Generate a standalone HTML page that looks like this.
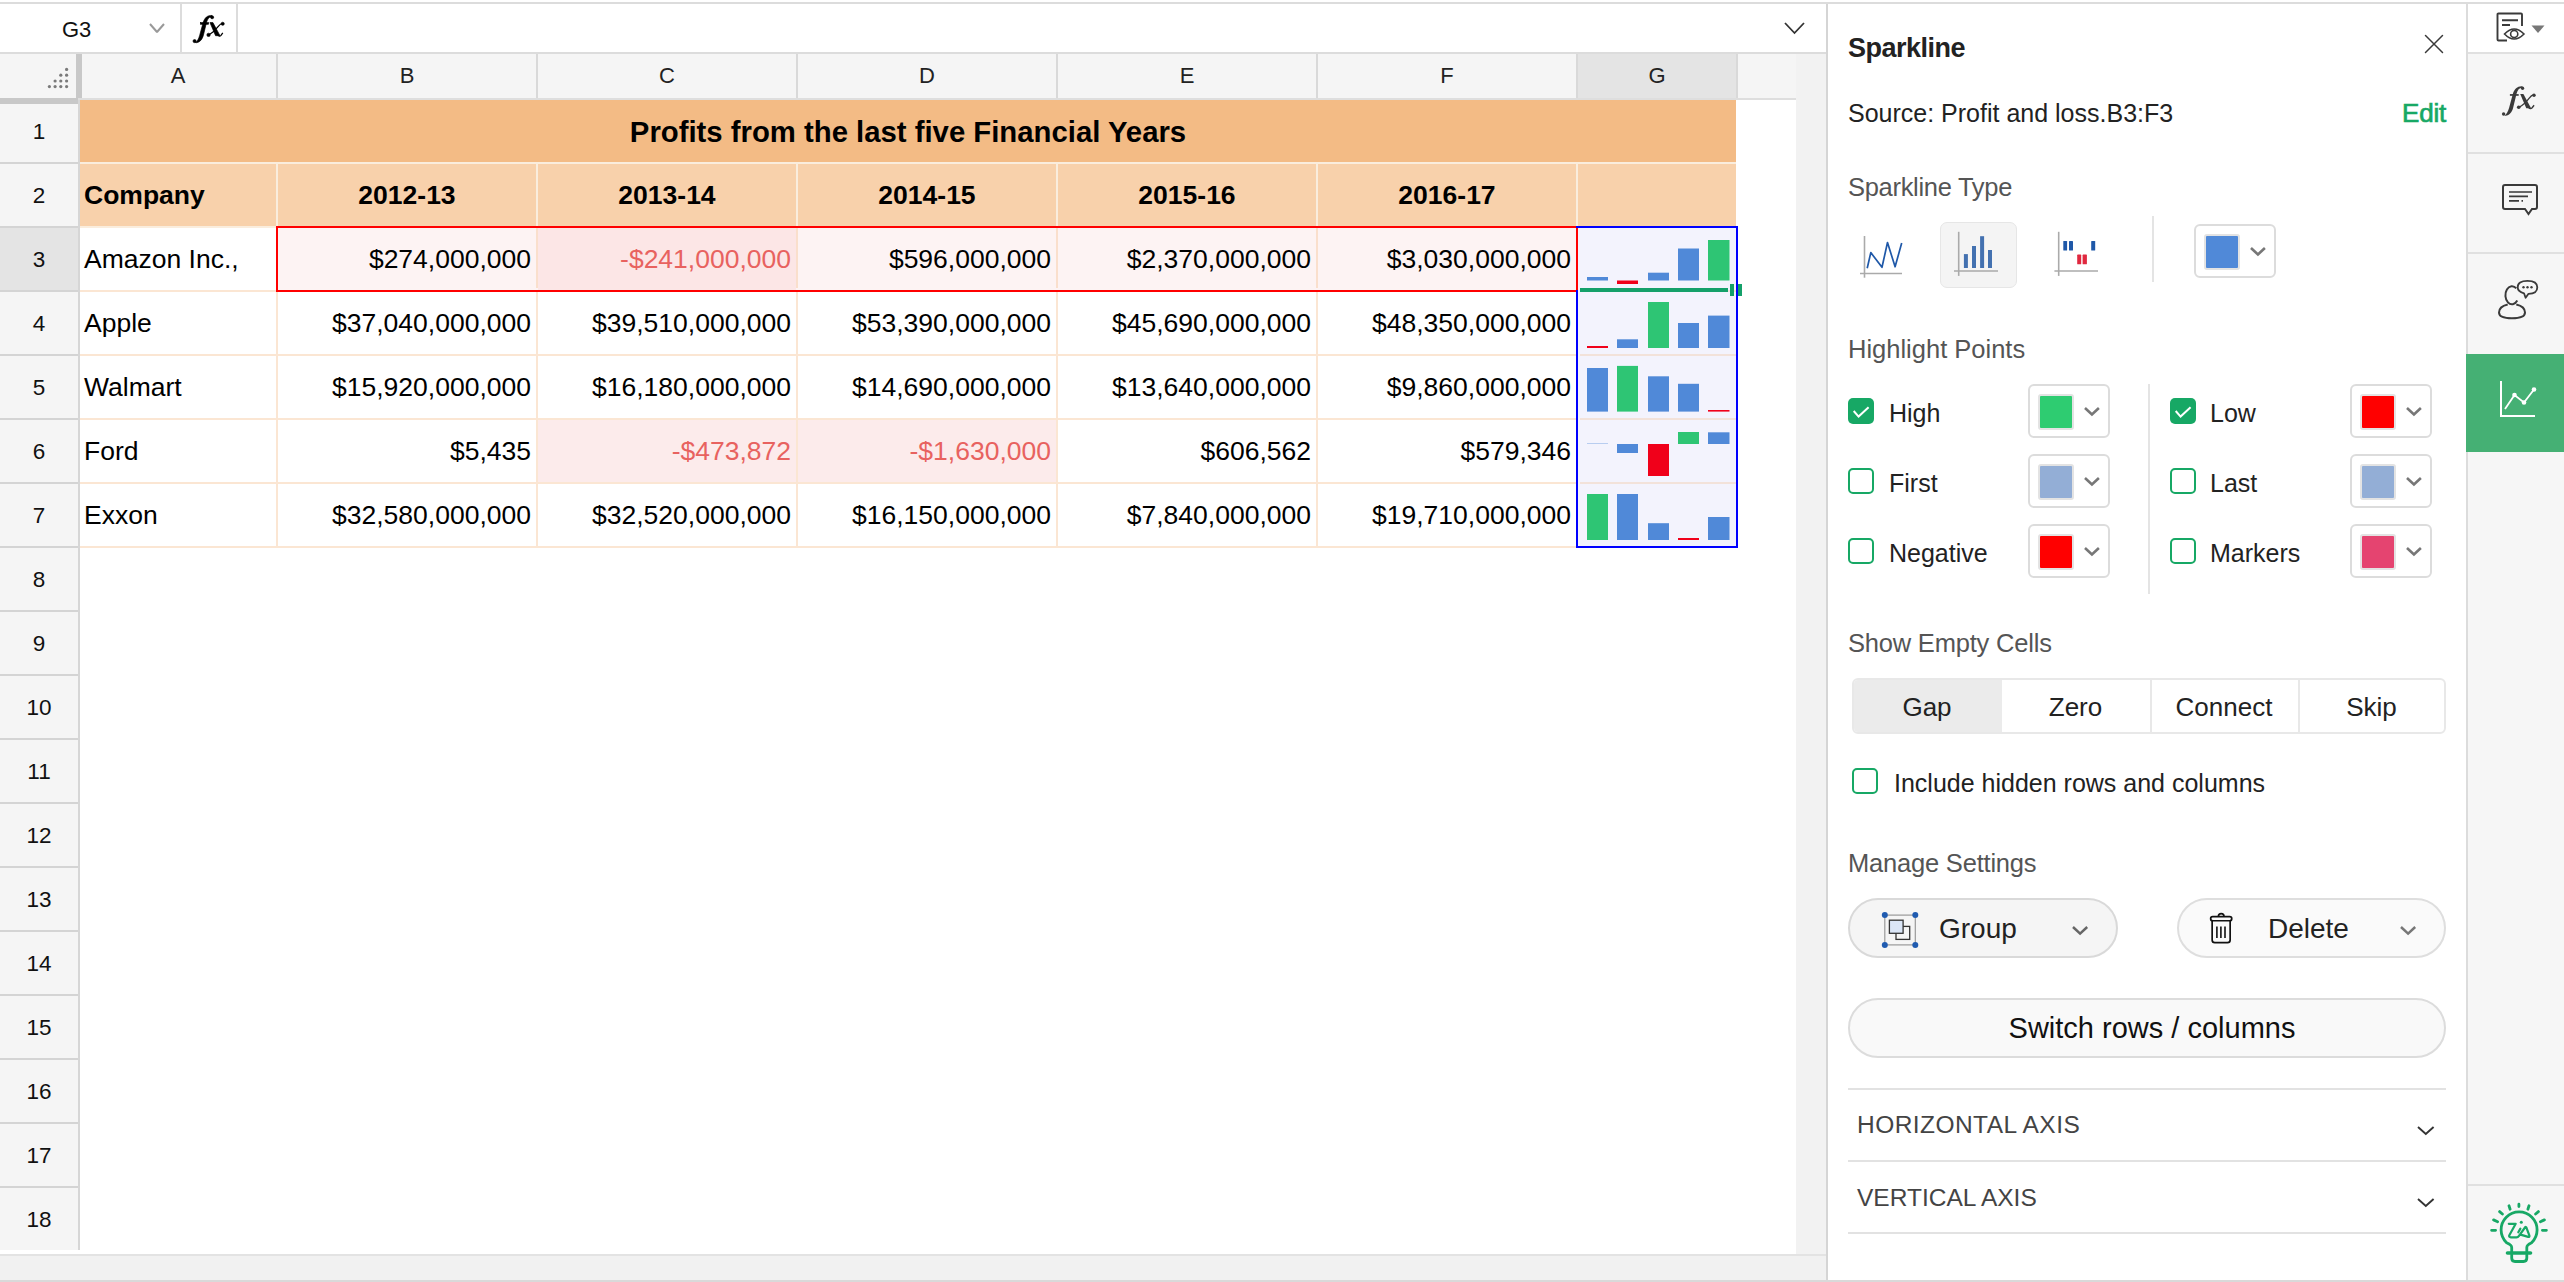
<!DOCTYPE html>
<html><head><meta charset="utf-8"><title>Sparkline</title>
<style>
html,body{margin:0;padding:0;}
body{width:2564px;height:1282px;position:relative;overflow:hidden;background:#fff;font-family:"Liberation Sans", sans-serif;}
.a{position:absolute;}
.t{position:absolute;white-space:nowrap;}
</style></head><body>
<div class="a" style="left:0px;top:2px;width:2564px;height:2px;background:#dcdcdc;"></div>
<div class="a" style="left:0px;top:52px;width:1826px;height:2px;background:#dcdcdc;"></div>
<div class="a" style="left:180px;top:4px;width:2px;height:48px;background:#dcdcdc;"></div>
<div class="a" style="left:236px;top:4px;width:2px;height:48px;background:#dcdcdc;"></div>
<div class="t" style="top:18.88px;font-size:22px;line-height:22px;color:#111;left:62px;">G3</div>
<svg class="a" style="left:148px;top:22px;" width="18" height="12" viewBox="0 0 18 12"><polyline points="2,2 9.0,10 16,2" fill="none" stroke="#999" stroke-width="2" stroke-linecap="butt" stroke-linejoin="miter" stroke-miterlimit="1.5"/></svg>
<svg class="a" style="left:181.5px;top:4.5px;" width="45" height="41" viewBox="0 0 45 41"><g transform="scale(0.925)" fill="#000" stroke="#000" stroke-width="0.7"><path d="M32.38,11.31 C27.31,10.92 24.58,14.05 23.02,18.34 L19.12,32.77 C17.95,37.07 16.39,39.41 14.44,40.58 L15.61,40.77 C19.51,40.19 21.85,37.07 23.02,33.16 L26.53,18.73 C27.70,14.83 29.65,12.49 32.38,12.88 Z"/><circle cx="32.58" cy="13.27" r="1.65"/><circle cx="13.6" cy="39.0" r="1.7"/><rect x="19.9" y="19.1" width="8.8" height="1.7"/><path d="M30.2,19.0 L33.4,19.0 L41.1,33.2 L36.3,33.2 Z"/><path d="M28.87,32.38 Q34.33,29.65 39.02,23.41 Q41.36,20.29 43.70,19.70" fill="none" stroke="#000" stroke-width="1.3"/><circle cx="44.0" cy="20.3" r="1.7"/><circle cx="28.7" cy="32.3" r="1.8"/><path d="M38.6,32.6 Q40.58,34.6 42.14,32.77 L44.09,30.24" fill="none" stroke="#000" stroke-width="1.4"/></g></svg>
<svg class="a" style="left:1783px;top:21px;" width="23" height="14" viewBox="0 0 23 14"><polyline points="2,2 11.5,12 21,2" fill="none" stroke="#333" stroke-width="1.8" stroke-linecap="butt" stroke-linejoin="miter" stroke-miterlimit="1.5"/></svg>
<div class="a" style="left:0px;top:54px;width:1796px;height:44px;background:#f5f5f5;"></div>
<div class="a" style="left:1578px;top:54px;width:158px;height:44px;background:#e4e4e4;"></div>
<div class="a" style="left:78px;top:98px;width:1718px;height:2px;background:#dedede;"></div>
<div class="a" style="left:276px;top:54px;width:2px;height:44px;background:#d9d9d9;"></div>
<div class="a" style="left:536px;top:54px;width:2px;height:44px;background:#d9d9d9;"></div>
<div class="a" style="left:796px;top:54px;width:2px;height:44px;background:#d9d9d9;"></div>
<div class="a" style="left:1056px;top:54px;width:2px;height:44px;background:#d9d9d9;"></div>
<div class="a" style="left:1316px;top:54px;width:2px;height:44px;background:#d9d9d9;"></div>
<div class="a" style="left:1576px;top:54px;width:2px;height:44px;background:#d9d9d9;"></div>
<div class="a" style="left:1736px;top:54px;width:2px;height:44px;background:#d9d9d9;"></div>
<div class="t" style="top:65.38px;font-size:22px;line-height:22px;color:#222;left:-822.0px;width:2000px;text-align:center;">A</div>
<div class="t" style="top:65.38px;font-size:22px;line-height:22px;color:#222;left:-593.0px;width:2000px;text-align:center;">B</div>
<div class="t" style="top:65.38px;font-size:22px;line-height:22px;color:#222;left:-333.0px;width:2000px;text-align:center;">C</div>
<div class="t" style="top:65.38px;font-size:22px;line-height:22px;color:#222;left:-73.0px;width:2000px;text-align:center;">D</div>
<div class="t" style="top:65.38px;font-size:22px;line-height:22px;color:#222;left:187.0px;width:2000px;text-align:center;">E</div>
<div class="t" style="top:65.38px;font-size:22px;line-height:22px;color:#222;left:447.0px;width:2000px;text-align:center;">F</div>
<div class="t" style="top:65.38px;font-size:22px;line-height:22px;color:#222;left:657.0px;width:2000px;text-align:center;">G</div>
<div class="a" style="left:0px;top:100px;width:78px;height:1150px;background:#f5f5f5;"></div>
<div class="a" style="left:78px;top:100px;width:2px;height:1150px;background:#d6d6d6;"></div>
<div class="a" style="left:0px;top:228px;width:78px;height:62px;background:#e4e4e4;"></div>
<div class="a" style="left:0px;top:162px;width:78px;height:2px;background:#d4d4d4;"></div>
<div class="t" style="top:121.15px;font-size:22.5px;line-height:22.5px;color:#111;left:-961px;width:2000px;text-align:center;">1</div>
<div class="a" style="left:0px;top:226px;width:78px;height:2px;background:#d4d4d4;"></div>
<div class="t" style="top:185.15px;font-size:22.5px;line-height:22.5px;color:#111;left:-961px;width:2000px;text-align:center;">2</div>
<div class="a" style="left:0px;top:290px;width:78px;height:2px;background:#d4d4d4;"></div>
<div class="t" style="top:249.15px;font-size:22.5px;line-height:22.5px;color:#111;left:-961px;width:2000px;text-align:center;">3</div>
<div class="a" style="left:0px;top:354px;width:78px;height:2px;background:#d4d4d4;"></div>
<div class="t" style="top:313.15px;font-size:22.5px;line-height:22.5px;color:#111;left:-961px;width:2000px;text-align:center;">4</div>
<div class="a" style="left:0px;top:418px;width:78px;height:2px;background:#d4d4d4;"></div>
<div class="t" style="top:377.15px;font-size:22.5px;line-height:22.5px;color:#111;left:-961px;width:2000px;text-align:center;">5</div>
<div class="a" style="left:0px;top:482px;width:78px;height:2px;background:#d4d4d4;"></div>
<div class="t" style="top:441.15px;font-size:22.5px;line-height:22.5px;color:#111;left:-961px;width:2000px;text-align:center;">6</div>
<div class="a" style="left:0px;top:546px;width:78px;height:2px;background:#d4d4d4;"></div>
<div class="t" style="top:505.15px;font-size:22.5px;line-height:22.5px;color:#111;left:-961px;width:2000px;text-align:center;">7</div>
<div class="a" style="left:0px;top:610px;width:78px;height:2px;background:#d4d4d4;"></div>
<div class="t" style="top:569.15px;font-size:22.5px;line-height:22.5px;color:#111;left:-961px;width:2000px;text-align:center;">8</div>
<div class="a" style="left:0px;top:674px;width:78px;height:2px;background:#d4d4d4;"></div>
<div class="t" style="top:633.15px;font-size:22.5px;line-height:22.5px;color:#111;left:-961px;width:2000px;text-align:center;">9</div>
<div class="a" style="left:0px;top:738px;width:78px;height:2px;background:#d4d4d4;"></div>
<div class="t" style="top:697.15px;font-size:22.5px;line-height:22.5px;color:#111;left:-961px;width:2000px;text-align:center;">10</div>
<div class="a" style="left:0px;top:802px;width:78px;height:2px;background:#d4d4d4;"></div>
<div class="t" style="top:761.15px;font-size:22.5px;line-height:22.5px;color:#111;left:-961px;width:2000px;text-align:center;">11</div>
<div class="a" style="left:0px;top:866px;width:78px;height:2px;background:#d4d4d4;"></div>
<div class="t" style="top:825.15px;font-size:22.5px;line-height:22.5px;color:#111;left:-961px;width:2000px;text-align:center;">12</div>
<div class="a" style="left:0px;top:930px;width:78px;height:2px;background:#d4d4d4;"></div>
<div class="t" style="top:889.15px;font-size:22.5px;line-height:22.5px;color:#111;left:-961px;width:2000px;text-align:center;">13</div>
<div class="a" style="left:0px;top:994px;width:78px;height:2px;background:#d4d4d4;"></div>
<div class="t" style="top:953.15px;font-size:22.5px;line-height:22.5px;color:#111;left:-961px;width:2000px;text-align:center;">14</div>
<div class="a" style="left:0px;top:1058px;width:78px;height:2px;background:#d4d4d4;"></div>
<div class="t" style="top:1017.15px;font-size:22.5px;line-height:22.5px;color:#111;left:-961px;width:2000px;text-align:center;">15</div>
<div class="a" style="left:0px;top:1122px;width:78px;height:2px;background:#d4d4d4;"></div>
<div class="t" style="top:1081.15px;font-size:22.5px;line-height:22.5px;color:#111;left:-961px;width:2000px;text-align:center;">16</div>
<div class="a" style="left:0px;top:1186px;width:78px;height:2px;background:#d4d4d4;"></div>
<div class="t" style="top:1145.15px;font-size:22.5px;line-height:22.5px;color:#111;left:-961px;width:2000px;text-align:center;">17</div>
<div class="t" style="top:1209.15px;font-size:22.5px;line-height:22.5px;color:#111;left:-961px;width:2000px;text-align:center;">18</div>
<div class="a" style="left:76px;top:54px;width:6px;height:44px;background:#c8c8c8;"></div>
<div class="a" style="left:0px;top:98px;width:78px;height:6px;background:#c8c8c8;"></div>
<svg class="a" style="left:40px;top:60px;" width="40" height="40" viewBox="0 0 40 40"><circle cx="26.599999999999994" cy="9.400000000000006" r="1.6" fill="#7a7a7a"/><circle cx="20.799999999999997" cy="15.200000000000003" r="1.6" fill="#7a7a7a"/><circle cx="26.599999999999994" cy="15.200000000000003" r="1.6" fill="#7a7a7a"/><circle cx="15.100000000000001" cy="21.0" r="1.6" fill="#7a7a7a"/><circle cx="20.799999999999997" cy="21.0" r="1.6" fill="#7a7a7a"/><circle cx="26.599999999999994" cy="21.0" r="1.6" fill="#7a7a7a"/><circle cx="9.399999999999999" cy="26.599999999999994" r="1.6" fill="#7a7a7a"/><circle cx="15.100000000000001" cy="26.599999999999994" r="1.6" fill="#7a7a7a"/><circle cx="20.799999999999997" cy="26.599999999999994" r="1.6" fill="#7a7a7a"/><circle cx="26.599999999999994" cy="26.599999999999994" r="1.6" fill="#7a7a7a"/></svg>
<div class="a" style="left:1796px;top:54px;width:30px;height:1200px;background:#f2f2f2;"></div>
<div class="a" style="left:0px;top:1254px;width:1826px;height:2px;background:#e3e3e3;"></div>
<div class="a" style="left:0px;top:1256px;width:1826px;height:24px;background:#f1f1f1;"></div>
<div class="a" style="left:0px;top:1280px;width:2564px;height:2px;background:#d9d9d9;"></div>
<div class="a" style="left:80px;top:100px;width:1656px;height:62px;background:#f3bb85;"></div>
<div class="a" style="left:80px;top:162px;width:1656px;height:2px;background:#faeddd;"></div>
<div class="a" style="left:80px;top:164px;width:1656px;height:62px;background:#f8d1ab;"></div>
<div class="a" style="left:276px;top:164px;width:2px;height:62px;background:#faeddd;"></div>
<div class="a" style="left:536px;top:164px;width:2px;height:62px;background:#faeddd;"></div>
<div class="a" style="left:796px;top:164px;width:2px;height:62px;background:#faeddd;"></div>
<div class="a" style="left:1056px;top:164px;width:2px;height:62px;background:#faeddd;"></div>
<div class="a" style="left:1316px;top:164px;width:2px;height:62px;background:#faeddd;"></div>
<div class="a" style="left:1576px;top:164px;width:2px;height:62px;background:#faeddd;"></div>
<div class="a" style="left:80px;top:226px;width:1656px;height:2px;background:#faeddd;"></div>
<div class="a" style="left:80px;top:290px;width:1656px;height:2px;background:#fbe6d3;"></div>
<div class="a" style="left:80px;top:354px;width:1656px;height:2px;background:#fbe6d3;"></div>
<div class="a" style="left:80px;top:418px;width:1656px;height:2px;background:#fbe6d3;"></div>
<div class="a" style="left:80px;top:482px;width:1656px;height:2px;background:#fbe6d3;"></div>
<div class="a" style="left:80px;top:546px;width:1656px;height:2px;background:#fbe6d3;"></div>
<div class="a" style="left:276px;top:228px;width:2px;height:320px;background:#fbe6d3;"></div>
<div class="a" style="left:536px;top:228px;width:2px;height:320px;background:#fbe6d3;"></div>
<div class="a" style="left:796px;top:228px;width:2px;height:320px;background:#fbe6d3;"></div>
<div class="a" style="left:1056px;top:228px;width:2px;height:320px;background:#fbe6d3;"></div>
<div class="a" style="left:1316px;top:228px;width:2px;height:320px;background:#fbe6d3;"></div>
<div class="a" style="left:1576px;top:228px;width:2px;height:320px;background:#fbe6d3;"></div>
<div class="a" style="left:1736px;top:228px;width:2px;height:320px;background:#fbe6d3;"></div>
<div class="a" style="left:278px;top:228px;width:1298px;height:62px;background:#fdf3f3;"></div>
<div class="a" style="left:536px;top:228px;width:2px;height:60px;background:#fadfcc;"></div>
<div class="a" style="left:796px;top:228px;width:2px;height:60px;background:#fadfcc;"></div>
<div class="a" style="left:1056px;top:228px;width:2px;height:60px;background:#fadfcc;"></div>
<div class="a" style="left:1316px;top:228px;width:2px;height:60px;background:#fadfcc;"></div>
<div class="a" style="left:538px;top:228px;width:258px;height:62px;background:#fce6e6;"></div>
<div class="a" style="left:538px;top:420px;width:258px;height:62px;background:#fcebeb;"></div>
<div class="a" style="left:798px;top:420px;width:258px;height:62px;background:#fcebeb;"></div>
<div class="a" style="left:1578px;top:228px;width:158px;height:318px;background:#f3f3fd;"></div>
<div class="a" style="left:1580px;top:290px;width:156px;height:2px;background:#f2e2da;"></div>
<div class="a" style="left:1580px;top:354px;width:156px;height:2px;background:#f2e2da;"></div>
<div class="a" style="left:1580px;top:418px;width:156px;height:2px;background:#f2e2da;"></div>
<div class="a" style="left:1580px;top:482px;width:156px;height:2px;background:#f2e2da;"></div>
<div class="t" style="top:116.70px;font-size:29.3px;line-height:29.3px;color:#000;font-weight:700;left:-92px;width:2000px;text-align:center;">Profits from the last five Financial Years</div>
<div class="t" style="top:182.07px;font-size:26.5px;line-height:26.5px;color:#000;font-weight:700;left:84px;">Company</div>
<div class="t" style="top:182.07px;font-size:26.5px;line-height:26.5px;color:#000;font-weight:700;left:-593.0px;width:2000px;text-align:center;">2012-13</div>
<div class="t" style="top:182.07px;font-size:26.5px;line-height:26.5px;color:#000;font-weight:700;left:-333.0px;width:2000px;text-align:center;">2013-14</div>
<div class="t" style="top:182.07px;font-size:26.5px;line-height:26.5px;color:#000;font-weight:700;left:-73.0px;width:2000px;text-align:center;">2014-15</div>
<div class="t" style="top:182.07px;font-size:26.5px;line-height:26.5px;color:#000;font-weight:700;left:187.0px;width:2000px;text-align:center;">2015-16</div>
<div class="t" style="top:182.07px;font-size:26.5px;line-height:26.5px;color:#000;font-weight:700;left:447.0px;width:2000px;text-align:center;">2016-17</div>
<div class="t" style="top:246.07px;font-size:26.5px;line-height:26.5px;color:#000;left:84px;">Amazon Inc.,</div>
<div class="t" style="top:246.07px;font-size:26.5px;line-height:26.5px;color:#000;left:-469px;width:1000px;text-align:right;">$274,000,000</div>
<div class="t" style="top:246.07px;font-size:26.5px;line-height:26.5px;color:#e8625f;left:-209px;width:1000px;text-align:right;">-$241,000,000</div>
<div class="t" style="top:246.07px;font-size:26.5px;line-height:26.5px;color:#000;left:51px;width:1000px;text-align:right;">$596,000,000</div>
<div class="t" style="top:246.07px;font-size:26.5px;line-height:26.5px;color:#000;left:311px;width:1000px;text-align:right;">$2,370,000,000</div>
<div class="t" style="top:246.07px;font-size:26.5px;line-height:26.5px;color:#000;left:571px;width:1000px;text-align:right;">$3,030,000,000</div>
<div class="t" style="top:310.07px;font-size:26.5px;line-height:26.5px;color:#000;left:84px;">Apple</div>
<div class="t" style="top:310.07px;font-size:26.5px;line-height:26.5px;color:#000;left:-469px;width:1000px;text-align:right;">$37,040,000,000</div>
<div class="t" style="top:310.07px;font-size:26.5px;line-height:26.5px;color:#000;left:-209px;width:1000px;text-align:right;">$39,510,000,000</div>
<div class="t" style="top:310.07px;font-size:26.5px;line-height:26.5px;color:#000;left:51px;width:1000px;text-align:right;">$53,390,000,000</div>
<div class="t" style="top:310.07px;font-size:26.5px;line-height:26.5px;color:#000;left:311px;width:1000px;text-align:right;">$45,690,000,000</div>
<div class="t" style="top:310.07px;font-size:26.5px;line-height:26.5px;color:#000;left:571px;width:1000px;text-align:right;">$48,350,000,000</div>
<div class="t" style="top:374.07px;font-size:26.5px;line-height:26.5px;color:#000;left:84px;">Walmart</div>
<div class="t" style="top:374.07px;font-size:26.5px;line-height:26.5px;color:#000;left:-469px;width:1000px;text-align:right;">$15,920,000,000</div>
<div class="t" style="top:374.07px;font-size:26.5px;line-height:26.5px;color:#000;left:-209px;width:1000px;text-align:right;">$16,180,000,000</div>
<div class="t" style="top:374.07px;font-size:26.5px;line-height:26.5px;color:#000;left:51px;width:1000px;text-align:right;">$14,690,000,000</div>
<div class="t" style="top:374.07px;font-size:26.5px;line-height:26.5px;color:#000;left:311px;width:1000px;text-align:right;">$13,640,000,000</div>
<div class="t" style="top:374.07px;font-size:26.5px;line-height:26.5px;color:#000;left:571px;width:1000px;text-align:right;">$9,860,000,000</div>
<div class="t" style="top:438.07px;font-size:26.5px;line-height:26.5px;color:#000;left:84px;">Ford</div>
<div class="t" style="top:438.07px;font-size:26.5px;line-height:26.5px;color:#000;left:-469px;width:1000px;text-align:right;">$5,435</div>
<div class="t" style="top:438.07px;font-size:26.5px;line-height:26.5px;color:#e8625f;left:-209px;width:1000px;text-align:right;">-$473,872</div>
<div class="t" style="top:438.07px;font-size:26.5px;line-height:26.5px;color:#e8625f;left:51px;width:1000px;text-align:right;">-$1,630,000</div>
<div class="t" style="top:438.07px;font-size:26.5px;line-height:26.5px;color:#000;left:311px;width:1000px;text-align:right;">$606,562</div>
<div class="t" style="top:438.07px;font-size:26.5px;line-height:26.5px;color:#000;left:571px;width:1000px;text-align:right;">$579,346</div>
<div class="t" style="top:502.07px;font-size:26.5px;line-height:26.5px;color:#000;left:84px;">Exxon</div>
<div class="t" style="top:502.07px;font-size:26.5px;line-height:26.5px;color:#000;left:-469px;width:1000px;text-align:right;">$32,580,000,000</div>
<div class="t" style="top:502.07px;font-size:26.5px;line-height:26.5px;color:#000;left:-209px;width:1000px;text-align:right;">$32,520,000,000</div>
<div class="t" style="top:502.07px;font-size:26.5px;line-height:26.5px;color:#000;left:51px;width:1000px;text-align:right;">$16,150,000,000</div>
<div class="t" style="top:502.07px;font-size:26.5px;line-height:26.5px;color:#000;left:311px;width:1000px;text-align:right;">$7,840,000,000</div>
<div class="t" style="top:502.07px;font-size:26.5px;line-height:26.5px;color:#000;left:571px;width:1000px;text-align:right;">$19,710,000,000</div>
<div class="a" style="left:276px;top:226px;width:1302px;height:66px;border:2px solid #ff0000;box-sizing:border-box;"></div>
<div class="a" style="left:1576px;top:226px;width:162px;height:322px;border:2px solid #0000ff;box-sizing:border-box;"></div>
<div class="a" style="left:1576px;top:228px;width:2px;height:62px;background:#ff0000;"></div>
<svg class="a" style="left:1570px;top:220px;" width="180" height="340" viewBox="0 0 180 340"><rect x="17" y="57" width="21" height="3.5" fill="#5089d8"/><rect x="47" y="60.5" width="21" height="3.5" fill="#f0001a"/><rect x="78" y="52.69999999999999" width="21" height="7.800000000000011" fill="#5089d8"/><rect x="108" y="28.5" width="21" height="32.0" fill="#5089d8"/><rect x="138" y="20" width="21.5" height="40.5" fill="#2ec574"/><rect x="17" y="126" width="21" height="2" fill="#f0001a"/><rect x="47" y="119.30000000000001" width="21" height="8.699999999999989" fill="#5089d8"/><rect x="78" y="82" width="21" height="46" fill="#2ec574"/><rect x="108" y="103" width="21" height="25" fill="#5089d8"/><rect x="138" y="95.60000000000002" width="21.5" height="32.39999999999998" fill="#5089d8"/><rect x="17" y="148" width="21" height="43.60000000000002" fill="#5089d8"/><rect x="47" y="145.89999999999998" width="21" height="45.700000000000045" fill="#2ec574"/><rect x="78" y="156.3" width="21" height="35.30000000000001" fill="#5089d8"/><rect x="108" y="163.8" width="21" height="27.80000000000001" fill="#5089d8"/><rect x="138" y="190" width="21.5" height="1.6000000000000227" fill="#f0001a"/><rect x="17" y="223" width="21" height="1" fill="#b8cdf0"/><rect x="47" y="224" width="21" height="9" fill="#5089d8"/><rect x="78" y="224" width="21" height="32" fill="#f0001a"/><rect x="108" y="212" width="21" height="12" fill="#2ec574"/><rect x="138" y="212.3" width="21.5" height="11.699999999999989" fill="#5089d8"/><rect x="17" y="274" width="21" height="46" fill="#2ec574"/><rect x="47" y="274" width="21" height="46" fill="#5089d8"/><rect x="78" y="303.20000000000005" width="21" height="16.799999999999955" fill="#5089d8"/><rect x="108" y="318" width="21" height="2" fill="#f0001a"/><rect x="138" y="297" width="21.5" height="23" fill="#5089d8"/></svg>
<div class="a" style="left:1580px;top:288px;width:148px;height:4px;background:#14a06a;"></div>
<div class="a" style="left:1730px;top:284px;width:4px;height:12px;background:#14a06a;"></div>
<div class="a" style="left:1737.5px;top:284px;width:4px;height:12px;background:#14a06a;"></div>
<div class="a" style="left:1826px;top:4px;width:2px;height:1276px;background:#d5d5d5;"></div>
<div id="panel-end"></div>
<div class="t" style="top:35.14px;font-size:27px;line-height:27px;color:#222;font-weight:700;letter-spacing:-0.5px;left:1848px;">Sparkline</div>
<svg class="a" style="left:2423px;top:33px;" width="22" height="22" viewBox="0 0 22 22"><path d="M2.5,2.5 L19.5,19.5 M19.5,2.5 L2.5,19.5" stroke="#3a3a3a" stroke-width="1.5" stroke-linecap="round" fill="none"/></svg>
<div class="t" style="top:100.84px;font-size:25px;line-height:25px;color:#222;left:1848px;">Source: Profit and loss.B3:F3</div>
<div class="t" style="top:99.99px;font-size:26px;line-height:26px;color:#18a865;letter-spacing:-0.2px;left:1446px;width:1000px;text-align:right;-webkit-text-stroke:0.7px #18a865;">Edit</div>
<div class="t" style="top:175.41px;font-size:25.5px;line-height:25.5px;color:#555;letter-spacing:-0.3px;left:1848px;">Sparkline Type</div>
<svg class="a" style="left:1850px;top:220px;" width="60" height="60" viewBox="0 0 60 60"><path d="M14.5,16 V57.7" stroke="#aaa" stroke-width="1.6"/><path d="M10,53.5 H52" stroke="#aaa" stroke-width="1.6"/><polyline points="17.2,48.3 20.8,32.6 32,47.3 37.5,22.5 45.1,46.8 51.7,23" fill="none" stroke="#1f58a8" stroke-width="1.7" stroke-linejoin="round"/></svg>
<div class="a" style="left:1940px;top:222px;width:77px;height:66px;background:#f4f4f4;border:1.5px solid #e6e6e6;border-radius:7px;box-sizing:border-box;"></div>
<svg class="a" style="left:1940px;top:220px;" width="62" height="60" viewBox="0 0 62 60"><path d="M18.7,11.8 V55.9" stroke="#aaa" stroke-width="1.6"/><path d="M14,51 H58" stroke="#aaa" stroke-width="1.6"/><rect x="23.9" y="34.1" width="4" height="13.9" fill="#4371b0"/><rect x="32" y="26" width="4" height="22" fill="#4371b0"/><rect x="40.1" y="16.2" width="4" height="31.8" fill="#4371b0"/><rect x="48" y="30" width="4" height="18" fill="#4371b0"/></svg>
<svg class="a" style="left:2040px;top:220px;" width="62" height="60" viewBox="0 0 62 60"><path d="M18.7,11.8 V55.9" stroke="#aaa" stroke-width="1.6"/><path d="M14.4,51 H58" stroke="#aaa" stroke-width="1.6"/><rect x="23.3" y="21" width="3.8" height="9.6" rx="0.6" fill="#1f58a8"/><rect x="29" y="21" width="4" height="9.6" rx="0.6" fill="#1f58a8"/><rect x="51.2" y="21" width="4" height="9.6" rx="0.6" fill="#1f58a8"/><rect x="37.2" y="34.6" width="4" height="9.7" rx="0.6" fill="#e0283f"/><rect x="42.6" y="34.6" width="4.3" height="9.7" rx="0.6" fill="#e0283f"/></svg>
<div class="a" style="left:2152px;top:216px;width:2px;height:66px;background:#e4e4e4;"></div>
<div class="a" style="left:2194px;top:224px;width:82px;height:54px;background:#fff;border:2px solid #dcdcdc;border-radius:6px;box-sizing:border-box;"></div>
<div class="a" style="left:2204px;top:234px;width:36px;height:36px;background:#5089d8;border:2px solid #e3e3e3;border-radius:3px;box-sizing:border-box;"></div>
<svg class="a" style="left:2249.3px;top:246.3px;" width="17.899999999999636" height="10.5" viewBox="0 0 17.899999999999636 10.5"><polyline points="2,2 8.949999999999818,8.5 15.899999999999636,2" fill="none" stroke="#777" stroke-width="2.6" stroke-linecap="butt" stroke-linejoin="miter" stroke-miterlimit="1.5"/></svg>
<div class="t" style="top:336.91px;font-size:25.5px;line-height:25.5px;color:#555;left:1848px;">Highlight Points</div>
<div class="a" style="left:1848px;top:398px;width:26px;height:26px;background:#17a865;border-radius:5px;"></div>
<svg class="a" style="left:1848px;top:398px;" width="26" height="26" viewBox="0 0 26 26"><polyline points="5.7,13 10.6,18.6 20.6,9.3" fill="none" stroke="#fff" stroke-width="2"/></svg>
<div class="t" style="top:400.84px;font-size:25px;line-height:25px;color:#222;left:1889px;">High</div>
<div class="a" style="left:2028px;top:384px;width:82px;height:54px;background:#fff;border:2px solid #dcdcdc;border-radius:6px;box-sizing:border-box;"></div>
<div class="a" style="left:2038px;top:394px;width:36px;height:36px;background:#2ecc71;border:2px solid #e3e3e3;border-radius:3px;box-sizing:border-box;"></div>
<svg class="a" style="left:2083.3px;top:406.3px;" width="17.899999999999636" height="10.5" viewBox="0 0 17.899999999999636 10.5"><polyline points="2,2 8.949999999999818,8.5 15.899999999999636,2" fill="none" stroke="#777" stroke-width="2.6" stroke-linecap="butt" stroke-linejoin="miter" stroke-miterlimit="1.5"/></svg>
<div class="a" style="left:2170px;top:398px;width:26px;height:26px;background:#17a865;border-radius:5px;"></div>
<svg class="a" style="left:2170px;top:398px;" width="26" height="26" viewBox="0 0 26 26"><polyline points="5.7,13 10.6,18.6 20.6,9.3" fill="none" stroke="#fff" stroke-width="2"/></svg>
<div class="t" style="top:400.84px;font-size:25px;line-height:25px;color:#222;left:2210px;">Low</div>
<div class="a" style="left:2350px;top:384px;width:82px;height:54px;background:#fff;border:2px solid #dcdcdc;border-radius:6px;box-sizing:border-box;"></div>
<div class="a" style="left:2360px;top:394px;width:36px;height:36px;background:#ff0000;border:2px solid #e3e3e3;border-radius:3px;box-sizing:border-box;"></div>
<svg class="a" style="left:2405.3px;top:406.3px;" width="17.899999999999636" height="10.5" viewBox="0 0 17.899999999999636 10.5"><polyline points="2,2 8.949999999999818,8.5 15.899999999999636,2" fill="none" stroke="#777" stroke-width="2.6" stroke-linecap="butt" stroke-linejoin="miter" stroke-miterlimit="1.5"/></svg>
<div class="a" style="left:1848px;top:468px;width:26px;height:26px;background:#fff;border:2px solid #17a865;border-radius:5px;box-sizing:border-box;"></div>
<div class="t" style="top:470.84px;font-size:25px;line-height:25px;color:#222;left:1889px;">First</div>
<div class="a" style="left:2028px;top:454px;width:82px;height:54px;background:#fff;border:2px solid #dcdcdc;border-radius:6px;box-sizing:border-box;"></div>
<div class="a" style="left:2038px;top:464px;width:36px;height:36px;background:#93aed6;border:2px solid #e3e3e3;border-radius:3px;box-sizing:border-box;"></div>
<svg class="a" style="left:2083.3px;top:476.3px;" width="17.899999999999636" height="10.5" viewBox="0 0 17.899999999999636 10.5"><polyline points="2,2 8.949999999999818,8.5 15.899999999999636,2" fill="none" stroke="#777" stroke-width="2.6" stroke-linecap="butt" stroke-linejoin="miter" stroke-miterlimit="1.5"/></svg>
<div class="a" style="left:2170px;top:468px;width:26px;height:26px;background:#fff;border:2px solid #17a865;border-radius:5px;box-sizing:border-box;"></div>
<div class="t" style="top:470.84px;font-size:25px;line-height:25px;color:#222;left:2210px;">Last</div>
<div class="a" style="left:2350px;top:454px;width:82px;height:54px;background:#fff;border:2px solid #dcdcdc;border-radius:6px;box-sizing:border-box;"></div>
<div class="a" style="left:2360px;top:464px;width:36px;height:36px;background:#93aed6;border:2px solid #e3e3e3;border-radius:3px;box-sizing:border-box;"></div>
<svg class="a" style="left:2405.3px;top:476.3px;" width="17.899999999999636" height="10.5" viewBox="0 0 17.899999999999636 10.5"><polyline points="2,2 8.949999999999818,8.5 15.899999999999636,2" fill="none" stroke="#777" stroke-width="2.6" stroke-linecap="butt" stroke-linejoin="miter" stroke-miterlimit="1.5"/></svg>
<div class="a" style="left:1848px;top:538px;width:26px;height:26px;background:#fff;border:2px solid #17a865;border-radius:5px;box-sizing:border-box;"></div>
<div class="t" style="top:540.84px;font-size:25px;line-height:25px;color:#222;left:1889px;">Negative</div>
<div class="a" style="left:2028px;top:524px;width:82px;height:54px;background:#fff;border:2px solid #dcdcdc;border-radius:6px;box-sizing:border-box;"></div>
<div class="a" style="left:2038px;top:534px;width:36px;height:36px;background:#ff0000;border:2px solid #e3e3e3;border-radius:3px;box-sizing:border-box;"></div>
<svg class="a" style="left:2083.3px;top:546.3px;" width="17.899999999999636" height="10.5" viewBox="0 0 17.899999999999636 10.5"><polyline points="2,2 8.949999999999818,8.5 15.899999999999636,2" fill="none" stroke="#777" stroke-width="2.6" stroke-linecap="butt" stroke-linejoin="miter" stroke-miterlimit="1.5"/></svg>
<div class="a" style="left:2170px;top:538px;width:26px;height:26px;background:#fff;border:2px solid #17a865;border-radius:5px;box-sizing:border-box;"></div>
<div class="t" style="top:540.84px;font-size:25px;line-height:25px;color:#222;left:2210px;">Markers</div>
<div class="a" style="left:2350px;top:524px;width:82px;height:54px;background:#fff;border:2px solid #dcdcdc;border-radius:6px;box-sizing:border-box;"></div>
<div class="a" style="left:2360px;top:534px;width:36px;height:36px;background:#e54470;border:2px solid #e3e3e3;border-radius:3px;box-sizing:border-box;"></div>
<svg class="a" style="left:2405.3px;top:546.3px;" width="17.899999999999636" height="10.5" viewBox="0 0 17.899999999999636 10.5"><polyline points="2,2 8.949999999999818,8.5 15.899999999999636,2" fill="none" stroke="#777" stroke-width="2.6" stroke-linecap="butt" stroke-linejoin="miter" stroke-miterlimit="1.5"/></svg>
<div class="a" style="left:2148px;top:384px;width:2px;height:210px;background:#e4e4e4;"></div>
<div class="t" style="top:630.91px;font-size:25.5px;line-height:25.5px;color:#555;letter-spacing:-0.2px;left:1848px;">Show Empty Cells</div>
<div class="a" style="left:1852px;top:678px;width:594px;height:56px;background:#fff;border:2px solid #e8e8e8;border-radius:6px;box-sizing:border-box;"></div>
<div class="a" style="left:1854px;top:680px;width:148px;height:52px;background:#ebebeb;border-radius:4px 0 0 4px;"></div>
<div class="a" style="left:2150px;top:680px;width:2px;height:52px;background:#e8e8e8;"></div>
<div class="a" style="left:2298px;top:680px;width:2px;height:52px;background:#e8e8e8;"></div>
<div class="t" style="top:694.49px;font-size:26px;line-height:26px;color:#222;left:927px;width:2000px;text-align:center;">Gap</div>
<div class="t" style="top:694.49px;font-size:26px;line-height:26px;color:#222;left:1075.5px;width:2000px;text-align:center;">Zero</div>
<div class="t" style="top:694.49px;font-size:26px;line-height:26px;color:#222;left:1224px;width:2000px;text-align:center;">Connect</div>
<div class="t" style="top:694.49px;font-size:26px;line-height:26px;color:#222;left:1371.5px;width:2000px;text-align:center;">Skip</div>
<div class="a" style="left:1852px;top:768px;width:26px;height:26px;background:#fff;border:2px solid #17a865;border-radius:5px;box-sizing:border-box;"></div>
<div class="t" style="top:770.84px;font-size:25px;line-height:25px;color:#222;left:1894px;">Include hidden rows and columns</div>
<div class="t" style="top:851.41px;font-size:25.5px;line-height:25.5px;color:#555;letter-spacing:-0.2px;left:1848px;">Manage Settings</div>
<div class="a" style="left:1848px;top:898px;width:270px;height:60px;background:#f5f5f5;border:2px solid #d9d9d9;border-radius:30px;box-sizing:border-box;"></div>
<svg class="a" style="left:1880px;top:910px;" width="40" height="40" viewBox="0 0 40 40"><rect x="4.8" y="5.1" width="30.5" height="29.8" fill="none" stroke="#999" stroke-width="1.2"/><rect x="16" y="16.4" width="13.7" height="13" fill="#f5f5f5" stroke="#333" stroke-width="1.3"/><rect x="9.4" y="10.2" width="13.7" height="13.1" fill="#dbe6f7" stroke="#333" stroke-width="1.3"/><circle cx="4.8" cy="5.1" r="3" fill="#1f5bb0"/><circle cx="35.3" cy="5.1" r="3" fill="#1f5bb0"/><circle cx="4.8" cy="34.9" r="3" fill="#1f5bb0"/><circle cx="35.3" cy="34.9" r="3" fill="#1f5bb0"/></svg>
<div class="t" style="top:914.90px;font-size:28px;line-height:28px;color:#222;left:1939px;">Group</div>
<svg class="a" style="left:2071px;top:925.2px;" width="18.199999999999818" height="10.599999999999909" viewBox="0 0 18.199999999999818 10.599999999999909"><polyline points="2,2 9.099999999999909,8.599999999999909 16.199999999999818,2" fill="none" stroke="#666" stroke-width="2.5" stroke-linecap="butt" stroke-linejoin="miter" stroke-miterlimit="1.5"/></svg>
<div class="a" style="left:2177px;top:898px;width:269px;height:60px;background:#fafafa;border:2px solid #dedede;border-radius:30px;box-sizing:border-box;"></div>
<svg class="a" style="left:2205px;top:908px;" width="32" height="38" viewBox="0 0 32 38"><g fill="none" stroke="#111" stroke-width="1.7"><rect x="5.65" y="8.65" width="21.1" height="4.1" rx="2"/><path d="M13.4,8.4 A2.8,2.8 0 0 1 19,8.4"/><path d="M7.15,12.75 V32 Q7.15,34.65 9.8,34.65 H22.5 Q25.15,34.65 25.15,32 V12.75"/><path d="M11.9,18.4 V30.1 M15.9,18.4 V30.1 M20,18.4 V30.1" stroke-width="1.6"/></g></svg>
<div class="t" style="top:914.90px;font-size:28px;line-height:28px;color:#222;left:2268px;">Delete</div>
<svg class="a" style="left:2399px;top:925.2px;" width="18.199999999999818" height="10.599999999999909" viewBox="0 0 18.199999999999818 10.599999999999909"><polyline points="2,2 9.099999999999909,8.599999999999909 16.199999999999818,2" fill="none" stroke="#777" stroke-width="2.5" stroke-linecap="butt" stroke-linejoin="miter" stroke-miterlimit="1.5"/></svg>
<div class="a" style="left:1848px;top:998px;width:598px;height:60px;background:#f9f9f9;border:2px solid #dcdcdc;border-radius:30px;box-sizing:border-box;"></div>
<div class="t" style="top:1013.85px;font-size:29px;line-height:29px;color:#111;left:1152px;width:2000px;text-align:center;">Switch rows / columns</div>
<div class="a" style="left:1848px;top:1088px;width:598px;height:2px;background:#e2e2e2;"></div>
<div class="a" style="left:1848px;top:1160px;width:598px;height:2px;background:#e2e2e2;"></div>
<div class="a" style="left:1848px;top:1232px;width:598px;height:2px;background:#e2e2e2;"></div>
<div class="t" style="top:1113.26px;font-size:24.5px;line-height:24.5px;color:#444;letter-spacing:0.45px;left:1857px;">HORIZONTAL AXIS</div>
<div class="t" style="top:1185.96px;font-size:24.5px;line-height:24.5px;color:#444;left:1857px;">VERTICAL AXIS</div>
<svg class="a" style="left:2416px;top:1125.2px;" width="19.59999999999991" height="11.0" viewBox="0 0 19.59999999999991 11.0"><polyline points="2,2 9.799999999999955,9.0 17.59999999999991,2" fill="none" stroke="#333" stroke-width="1.9" stroke-linecap="butt" stroke-linejoin="miter" stroke-miterlimit="1.5"/></svg>
<svg class="a" style="left:2416px;top:1197.2px;" width="19.59999999999991" height="11.0" viewBox="0 0 19.59999999999991 11.0"><polyline points="2,2 9.799999999999955,9.0 17.59999999999991,2" fill="none" stroke="#333" stroke-width="1.9" stroke-linecap="butt" stroke-linejoin="miter" stroke-miterlimit="1.5"/></svg>
<div class="a" style="left:2466px;top:4px;width:2px;height:1276px;background:#dcdcdc;"></div>
<div class="a" style="left:2468px;top:54px;width:96px;height:1226px;background:#f6f6f6;"></div>
<div class="a" style="left:2468px;top:52px;width:96px;height:2px;background:#e0e0e0;"></div>
<div class="a" style="left:2468px;top:152px;width:96px;height:2px;background:#e0e0e0;"></div>
<div class="a" style="left:2468px;top:252px;width:96px;height:2px;background:#e0e0e0;"></div>
<div class="a" style="left:2466px;top:354px;width:98px;height:98px;background:#45b074;"></div>
<div class="a" style="left:2468px;top:1184px;width:96px;height:2px;background:#e0e0e0;"></div>
<svg class="a" style="left:2495px;top:12px;" width="32" height="32" viewBox="0 0 32 32"><path d="M12,28.5 H3.5 Q2.5,28.5 2.5,27.5 V2.5 Q2.5,1.5 3.5,1.5 H26 Q27,1.5 27,2.5 V14" fill="none" stroke="#3a3a3a" stroke-width="1.9"/><path d="M7,8.2 H23 M7,13 H15" stroke="#3a3a3a" stroke-width="1.9"/><path d="M9.5,22 Q19.2,12 29,22 Q19.2,32 9.5,22 Z" fill="#fff" stroke="#3a3a3a" stroke-width="1.6"/><circle cx="19.2" cy="22" r="3.6" fill="none" stroke="#3a3a3a" stroke-width="1.6"/></svg>
<svg class="a" style="left:2531px;top:25px;" width="14" height="9" viewBox="0 0 14 9"><polygon points="0.5,0.5 13.5,0.5 7,8" fill="#777"/></svg>
<svg class="a" style="left:2490px;top:75px;" width="49" height="45" viewBox="0 0 49 45"><g transform="scale(1.0)" fill="#3a3a3a" stroke="#3a3a3a" stroke-width="0"><path d="M32.38,11.31 C27.31,10.92 24.58,14.05 23.02,18.34 L19.12,32.77 C17.95,37.07 16.39,39.41 14.44,40.58 L15.61,40.77 C19.51,40.19 21.85,37.07 23.02,33.16 L26.53,18.73 C27.70,14.83 29.65,12.49 32.38,12.88 Z"/><circle cx="32.58" cy="13.27" r="1.65"/><circle cx="13.6" cy="39.0" r="1.7"/><rect x="19.9" y="19.1" width="8.8" height="1.7"/><path d="M30.2,19.0 L33.4,19.0 L41.1,33.2 L36.3,33.2 Z"/><path d="M28.87,32.38 Q34.33,29.65 39.02,23.41 Q41.36,20.29 43.70,19.70" fill="none" stroke="#3a3a3a" stroke-width="1.3"/><circle cx="44.0" cy="20.3" r="1.7"/><circle cx="28.7" cy="32.3" r="1.8"/><path d="M38.6,32.6 Q40.58,34.6 42.14,32.77 L44.09,30.24" fill="none" stroke="#3a3a3a" stroke-width="1.4"/></g></svg>
<svg class="a" style="left:2502px;top:183px;" width="37" height="34" viewBox="0 0 37 34"><path d="M3,2 H33 Q35,2 35,4 V24 Q35,26 33,26 H30 L26.5,31 L23,26 H3 Q1,26 1,24 V4 Q1,2 3,2 Z" fill="none" stroke="#3a3a3a" stroke-width="2"/><path d="M7,9 H30 M7,13.3 H26 M7,17.8 H17 M19.5,17.8 H21" stroke="#3a3a3a" stroke-width="1.7"/></svg>
<svg class="a" style="left:2497px;top:278px;" width="44" height="44" viewBox="0 0 44 44"><path d="M19.3,10.4 A6.6,9 0 1 0 20.3,22.6" fill="none" stroke="#3a3a3a" stroke-width="2"/><path d="M10.7,26.5 Q2,28.5 2,34.5 Q2,40.3 15,40.3 Q28,40.3 28,34.5 Q28,28.5 19.3,26.5" fill="none" stroke="#3a3a3a" stroke-width="2"/><path d="M27,15.3 Q20.7,13.5 20.7,9.3 Q20.7,2.8 30.5,2.8 Q40.3,2.8 40.3,9.3 Q40.3,15.8 31.5,15.8 L28.6,19.8 Z" fill="#f6f6f6" stroke="#3a3a3a" stroke-width="1.8" stroke-linejoin="round"/><circle cx="26.5" cy="9.3" r="1.2" fill="#3a3a3a"/><circle cx="30.5" cy="9.3" r="1.2" fill="#3a3a3a"/><circle cx="34.5" cy="9.3" r="1.2" fill="#3a3a3a"/></svg>
<svg class="a" style="left:2499px;top:380px;" width="40" height="40" viewBox="0 0 40 40"><path d="M2,1 V36 H36" fill="none" stroke="#fff" stroke-width="2"/><polyline points="6,29 15.5,15 25,22.5 35,9.5" fill="none" stroke="#fff" stroke-width="1.8"/><circle cx="15.5" cy="15" r="2.3" fill="#fff"/><circle cx="25" cy="22.5" r="2.3" fill="#fff"/><circle cx="35" cy="9.5" r="2.3" fill="#fff"/></svg>
<svg class="a" style="left:2488px;top:1200px;" width="62" height="64" viewBox="0 0 62 64"><g fill="none" stroke="#17a865" stroke-linecap="round" stroke-linejoin="round"><path d="M23.7,51.5 V47.5 Q23.7,45 18.6,42.8 A18,18 0 1 1 43.6,42.8 Q38.8,45 38.8,47.5 V51.5" stroke-width="2.8"/><path d="M19.5,53 H42.5" stroke-width="3.6"/><path d="M23.7,55 V58 Q23.7,61.5 27,61.5 H35.5 Q38.8,61.5 38.8,58 V55" stroke-width="2.8"/><path d="M30.9,4.2 V6.5 M21,5.8 L22.1,9.2 M41,5.8 L39.9,9.2 M11.6,11.6 L14.4,14 M50.4,11.6 L47.6,14 M5.6,19.9 L9.6,21.7 M56.4,19.9 L52.4,21.7 M3.6,30.3 H7.6 M54.4,30.3 H58.4" stroke-width="2.8"/><path d="M20.8,23.8 H27.7 L21.2,35.5 Q20.8,37.3 22.8,37.3 H28.5 Q30,37.3 31,35.8 L37,27.5 Q37.8,26.4 38.4,27.6 L41.4,35.6 Q41.7,37.2 40.2,36.9 L32.5,34.6" stroke-width="2.2"/><path d="M30.3,32.3 L32.4,28.6" stroke-width="2.2"/></g><circle cx="33.3" cy="22.3" r="1.5" fill="#17a865"/></svg>
</body></html>
